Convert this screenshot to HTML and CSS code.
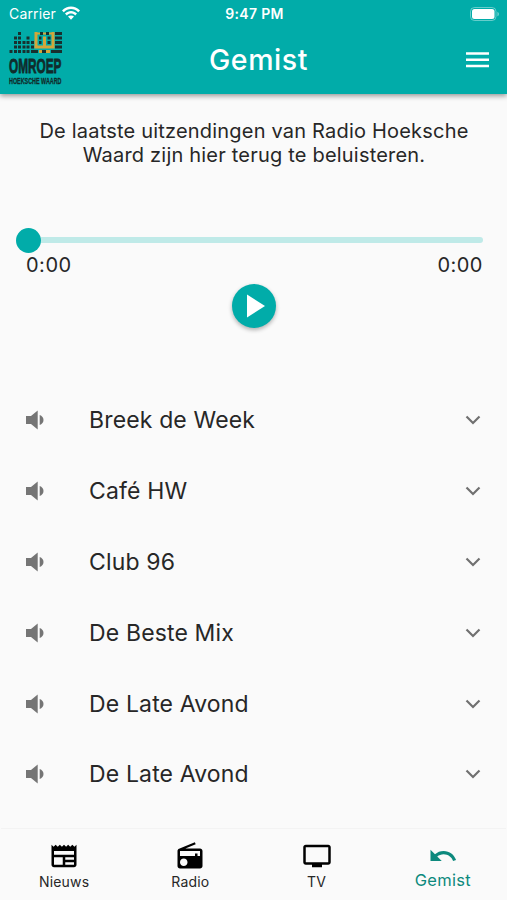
FILE: index.html
```html
<!DOCTYPE html>
<html lang="nl">
<head>
<meta charset="utf-8">
<title>Gemist</title>
<link rel="stylesheet" href="styles.css">
</head>
<body>
<svg class="defs" aria-hidden="true">
  <symbol id="volume" viewBox="0 0 18 20"><path d="M0 6v8h5l6.700 5.600V.4L5 6zM13.700 5v10c2.300-.8 3.800-2.600 3.800-5s-1.500-4.200-3.800-5z"/></symbol>
  <symbol id="chevron" viewBox="0 0 16 10"><path d="M1.500 1.500 8 8l6.500-6.500" fill="none" stroke="currentColor" stroke-width="2.200"/></symbol>
</svg>
<header class="appbar">
  <div class="status">
    <span class="carrier">Carrier <svg class="wifi" viewBox="0 0 18 14"><path d="M0 4.400C5-.9 13-.9 18 4.400l-1.800 1.900C12 2 6 2 1.800 6.300zM3 7.500c3.500-3.500 8.500-3.500 12 0l-1.800 1.900c-2.500-2.400-5.900-2.400-8.400 0zM6 10.600c1.700-1.500 4.300-1.500 6 0l-3 3.100z" fill="#fff"/></svg></span>
    <span class="time">9:47 PM</span>
    <svg class="battery" viewBox="0 0 30 14"><rect x=".5" y=".5" width="25.500" height="13" rx="4" fill="none" stroke="#fff" stroke-opacity=".4"/><rect x="2" y="2" width="22.500" height="10" rx="2.500" fill="#fff"/><path d="M27.300 4.700c2.300.8 2.300 3.800 0 4.600z" fill="#fff" opacity=".4"/></svg>
  </div>
  <div class="toolbar">
    <svg class="logo" viewBox="0 0 54 56">
      <g fill="none" stroke="#18302f" stroke-width="3">
        <path d="M9 2.500h3M31 2.500h3M37 2.500h3M46 2.500h7"/>
        <path d="M5 7h3M9 7h3M17.500 7h3M30 7h2.500M38.500 7h3M46 7h7"/>
        <path d="M5 11.500h3M9 11.500h3M13.500 11.500h3M17.500 11.500h3M22 11.500h3M30 11.500h2.500M38.500 11.500h3M46 11.500h7"/>
        <path d="M5 16h3M9 16h3M13.500 16h3M17.500 16h3M22 16h3M46 16h7"/>
        <path d="M.5 20.500h3M5 20.500h3M9 20.500h3M13.500 20.500h3M17.500 20.500h3M22 20.500h7M33 20.500h4M42 20.500h11"/>
      </g>
      <path d="M27 1v16.500M44 1v16.500M26 16h19M35.500 5.500v11M30 20.500h3M37 20.500h4" fill="none" stroke="#d3a63a" stroke-width="3"/>
      <path d="M26 2.500h5M34 2.500h3M40 2.500h5" stroke="#d3a63a" stroke-width="2"/>
      <text class="logo-main" x="0" y="42" textLength="52.500" lengthAdjust="spacingAndGlyphs">OMROEP</text>
      <text class="logo-sub" x="0" y="53.400" textLength="52.500" lengthAdjust="spacingAndGlyphs">HOEKSCHE WAARD</text>
    </svg>
    <h1 class="title">Gemist</h1>
    <svg class="menu" viewBox="0 0 23 16"><path d="M0 1.500h23M0 7.800h23M0 14h23" stroke="#fff" stroke-width="2.600"/></svg>
  </div>
</header>
<main class="content">
  <p class="intro">De laatste uitzendingen van Radio Hoeksche<br>Waard zijn hier terug te beluisteren.</p>
  <div class="slider"><span class="thumb"></span><span class="track"></span></div>
  <div class="times"><span>0:00</span><span>0:00</span></div>
  <button class="play" aria-label="Afspelen"><svg viewBox="0 0 18 24"><path d="M0 .5v23L18 12z" fill="#fff"/></svg></button>
  <ul class="list">
    <li><svg class="vol"><use href="#volume"/></svg><span>Breek de Week</span><svg class="chev"><use href="#chevron"/></svg></li>
    <li><svg class="vol"><use href="#volume"/></svg><span>Café HW</span><svg class="chev"><use href="#chevron"/></svg></li>
    <li><svg class="vol"><use href="#volume"/></svg><span>Club 96</span><svg class="chev"><use href="#chevron"/></svg></li>
    <li><svg class="vol"><use href="#volume"/></svg><span>De Beste Mix</span><svg class="chev"><use href="#chevron"/></svg></li>
    <li><svg class="vol"><use href="#volume"/></svg><span>De Late Avond</span><svg class="chev"><use href="#chevron"/></svg></li>
    <li><svg class="vol"><use href="#volume"/></svg><span>De Late Avond</span><svg class="chev"><use href="#chevron"/></svg></li>
  </ul>
</main>
<nav class="tabs">
  <a class="tab"><svg viewBox="0 0 24 24"><path fill-rule="evenodd" d="M22 3l-1.670 1.670L18.670 3 17 4.670 15.330 3l-1.660 1.670L12 3l-1.670 1.670L8.670 3 7 4.670 5.330 3 3.670 4.670 2 3v16c0 1.100.9 2 2 2h16c1.100 0 2-.9 2-2V3zM11 19H4v-6h7v6zm9 0h-7v-2h7v2zm0-4h-7v-2h7v2zm0-4H4V8h16v3z"/></svg><span>Nieuws</span></a>
  <a class="tab"><svg viewBox="0 0 24 24"><path d="M3.240 6.150C2.510 6.430 2 7.170 2 8v12c0 1.100.89 2 2 2h16c1.110 0 2-.9 2-2V8c0-1.110-.89-2-2-2H8.300l8.260-3.340L15.880 1 3.240 6.150zM7 20c-1.660 0-3-1.340-3-3s1.340-3 3-3 3 1.340 3 3-1.340 3-3 3zm13-8h-2v-2h-2v2H4V8h16v4z"/></svg><span>Radio</span></a>
  <a class="tab"><svg viewBox="0 0 24 24"><path d="M21 3H3c-1.100 0-2 .9-2 2v12c0 1.100.9 2 2 2h5v2h8v-2h5c1.100 0 1.990-.9 1.990-2L23 5c0-1.100-.9-2-2-2zm0 14H3V5h18v12z"/></svg><span>TV</span></a>
  <a class="tab active"><svg viewBox="0 0 24 24"><path d="M12.500 8c-2.650 0-5.050.99-6.900 2.600L2 7v9h9l-3.620-3.620c1.390-1.160 3.160-1.880 5.120-1.880 3.540 0 6.550 2.310 7.600 5.500l2.370-.78C21.080 11.030 17.150 8 12.500 8z"/></svg><span>Gemist</span></a>
</nav>
</body>
</html>
```

FILE: styles.css
```css
* { box-sizing: border-box; }
body {
  margin: 0;
  height: 900px;
  display: flex;
  flex-direction: column;
  background: #fafafa;
  color: #272727;
  font-family: Inter, "Liberation Sans", sans-serif;
  overflow: hidden;
}
svg { display: block; flex: none; }
.defs { display: none; }
.appbar {
  height: 94px;
  background: #01aca9;
  color: #fff;
  box-shadow: 0 2px 5px rgba(0, 0, 0, .4);
}
.status {
  height: 27px;
  padding: 0 7px 0 9px;
  display: grid;
  grid-template-columns: 1fr auto 1fr;
  align-items: center;
  font-size: 14px;
}
.carrier { display: flex; align-items: center; gap: 6px; letter-spacing: .15px; }
.wifi { width: 18px; height: 14px; margin-top: -2px; }
.time { font-weight: 600; font-size: 14px; letter-spacing: .3px; }
.battery { width: 30px; height: 14px; justify-self: end; }
.toolbar {
  height: 67px;
  padding: 0 18px 0 9px;
  display: flex;
  align-items: center;
}
.logo { width: 54px; height: 56px; margin-top: -3px; overflow: visible; }
.logo-main { font: bold 20.500px "Liberation Sans", sans-serif; fill: #102c2c; stroke: #102c2c; stroke-width: .8; }
.logo-sub { font: bold 8.500px "Liberation Sans", sans-serif; fill: #102c2c; stroke: #102c2c; stroke-width: .3; }
.title {
  flex: 1;
  margin: -2px 0 0;
  padding: 0 20px 0 8px;
  text-align: center;
  font-size: 28.500px;
  font-weight: 500;
  letter-spacing: .6px;
}
.menu { width: 23px; height: 16px; margin-top: -1px; }
.content { flex: 1; }
.intro {
  margin: 25px 0 0;
  padding-left: 1px;
  text-align: center;
  font-size: 20px;
  line-height: 24.300px;
  letter-spacing: .2px;
}
.slider { display: flex; align-items: center; margin: 60px 24px 0 16px; height: 25px; }
.thumb { width: 25px; height: 25px; border-radius: 50%; background: #01aca9; }
.track { flex: 1; height: 6px; border-radius: 0 3px 3px 0; background: #bfeae8; }
.times {
  display: flex;
  justify-content: space-between;
  padding: 0 24px 0 26px;
  font-size: 20px;
  line-height: 25px;
  letter-spacing: .5px;
}
.play {
  display: flex;
  align-items: center;
  justify-content: center;
  width: 44px;
  height: 44px;
  margin: 6px auto 0;
  padding: 0 0 0 5px;
  border: 0;
  border-radius: 50%;
  background: #01aca9;
  box-shadow: 0 2px 4px rgba(0, 0, 0, .3);
}
.play svg { width: 18px; height: 24px; }
.list { list-style: none; margin: 57px 0 0; padding: 0 26px; }
.list li { height: 70.900px; display: flex; align-items: center; font-size: 23px; letter-spacing: .15px; }
.list span { flex: 1; }
.vol { width: 18px; height: 20px; margin-right: 45px; fill: #757575; }
.chev { width: 16px; height: 10px; color: #707070; }
.tabs {
  height: 72px;
  margin: 0 1px;
  display: grid;
  grid-template-columns: repeat(4, 1fr);
  border-top: 1px solid #f3f3f3;
}
.tab { display: flex; flex-direction: column; align-items: center; padding-top: 12px; font-size: 14px; line-height: 21px; letter-spacing: .2px; }
.tab svg { width: 30px; height: 30px; fill: #000; }
.tab.active { font-size: 16.500px; line-height: 19px; letter-spacing: .3px; color: #0d897d; }
.tab.active svg { fill: #0d897d; }
```
